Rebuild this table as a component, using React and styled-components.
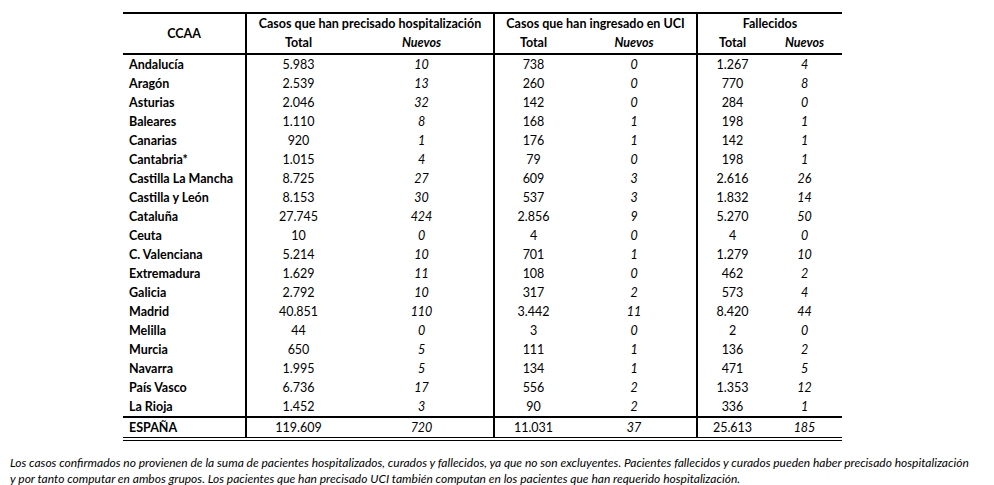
import React from "react";
import styled, { createGlobalStyle } from "styled-components";

const GlobalStyle = createGlobalStyle`
  html, body {
    margin: 0;
    padding: 0;
    background: #ffffff;
  }
  body {
    font-family: Lato, "Open Sans", "Liberation Sans", sans-serif;
    color: #000000;
  }
`;

const Page = styled.div`
  width: 994px;
  height: 485px;
  padding-top: 12px;
  box-sizing: border-box;
  overflow: hidden;
`;

const Table = styled.table`
  margin-left: 123px;
  width: 719px;
  border-collapse: collapse;
  table-layout: fixed;
  font-size: 12.5px;
  line-height: 15px;
  border-top: 2px solid #000;
  border-bottom: 4px double #000;
`;

const HeadRow = styled.tr`
  height: ${(p) => p.$h}px;
`;

const HeadCell = styled.th`
  font-weight: 700;
  font-style: ${(p) => (p.$italic ? "italic" : "normal")};
  text-align: center;
  padding: 0;
  vertical-align: middle;
  border-left: ${(p) => (p.$sep ? "2px solid #000" : "none")};
  border-bottom: ${(p) => (p.$line ? "2px solid #000" : "none")};
`;

const Row = styled.tr`
  height: 19px;
  border-top: ${(p) => (p.$total ? "2px solid #000" : "none")};
`;

const NameCell = styled.td`
  font-weight: 700;
  padding: 0 0 0 6px;
  white-space: nowrap;
  height: 19px;
`;

const NumCell = styled.td`
  text-align: center;
  padding: 0;
  font-style: ${(p) => (p.$italic ? "italic" : "normal")};
  border-left: ${(p) => (p.$sep ? "2px solid #000" : "none")};
`;

const Note = styled.p`
  margin: 14px 0 0 10px;
  width: 980px;
  font-size: 12px;
  line-height: 16px;
  font-style: italic;
  white-space: nowrap;
`;

const rows = [
  ["Andalucía", "5.983", "10", "738", "0", "1.267", "4"],
  ["Aragón", "2.539", "13", "260", "0", "770", "8"],
  ["Asturias", "2.046", "32", "142", "0", "284", "0"],
  ["Baleares", "1.110", "8", "168", "1", "198", "1"],
  ["Canarias", "920", "1", "176", "1", "142", "1"],
  ["Cantabria*", "1.015", "4", "79", "0", "198", "1"],
  ["Castilla La Mancha", "8.725", "27", "609", "3", "2.616", "26"],
  ["Castilla y León", "8.153", "30", "537", "3", "1.832", "14"],
  ["Cataluña", "27.745", "424", "2.856", "9", "5.270", "50"],
  ["Ceuta", "10", "0", "4", "0", "4", "0"],
  ["C. Valenciana", "5.214", "10", "701", "1", "1.279", "10"],
  ["Extremadura", "1.629", "11", "108", "0", "462", "2"],
  ["Galicia", "2.792", "10", "317", "2", "573", "4"],
  ["Madrid", "40.851", "110", "3.442", "11", "8.420", "44"],
  ["Melilla", "44", "0", "3", "0", "2", "0"],
  ["Murcia", "650", "5", "111", "1", "136", "2"],
  ["Navarra", "1.995", "5", "134", "1", "471", "5"],
  ["País Vasco", "6.736", "17", "556", "2", "1.353", "12"],
  ["La Rioja", "1.452", "3", "90", "2", "336", "1"],
];

const total = ["ESPAÑA", "119.609", "720", "11.031", "37", "25.613", "185"];

function DataRow({ cells, isTotal }) {
  const [name, ...nums] = cells;
  return (
    <Row $total={isTotal}>
      <NameCell>{name}</NameCell>
      {nums.map((n, i) => (
        <NumCell key={i} $italic={i % 2 === 1} $sep={i % 2 === 0}>
          {n}
        </NumCell>
      ))}
    </Row>
  );
}

export default function App() {
  return (
    <>
      <GlobalStyle />
      <Page>
        <Table>
          <colgroup>
            <col style={{ width: 123 }} />
            <col style={{ width: 104 }} />
            <col style={{ width: 144 }} />
            <col style={{ width: 78 }} />
            <col style={{ width: 125 }} />
            <col style={{ width: 70 }} />
            <col style={{ width: 75 }} />
          </colgroup>
          <thead>
            <HeadRow $h={19}>
              <HeadCell rowSpan={2} $line>
                CCAA
              </HeadCell>
              <HeadCell colSpan={2} $sep>
                Casos que han precisado hospitalización
              </HeadCell>
              <HeadCell colSpan={2} $sep>
                Casos que han ingresado en UCI
              </HeadCell>
              <HeadCell colSpan={2} $sep>
                Fallecidos
              </HeadCell>
            </HeadRow>
            <HeadRow $h={22}>
              <HeadCell $sep $line>Total</HeadCell>
              <HeadCell $italic $line>Nuevos</HeadCell>
              <HeadCell $sep $line>Total</HeadCell>
              <HeadCell $italic $line>Nuevos</HeadCell>
              <HeadCell $sep $line>Total</HeadCell>
              <HeadCell $italic $line>Nuevos</HeadCell>
            </HeadRow>
          </thead>
          <tbody>
            {rows.map((r) => (
              <DataRow key={r[0]} cells={r} />
            ))}
            <DataRow cells={total} isTotal />
          </tbody>
        </Table>
        <Note>
          Los casos confirmados no provienen de la suma de pacientes hospitalizados, curados y fallecidos, ya que no son excluyentes. Pacientes fallecidos y curados pueden haber precisado hospitalización
          <br />
          y por tanto computar en ambos grupos. Los pacientes que han precisado UCI también computan en los pacientes que han requerido hospitalización.
        </Note>
      </Page>
    </>
  );
}
